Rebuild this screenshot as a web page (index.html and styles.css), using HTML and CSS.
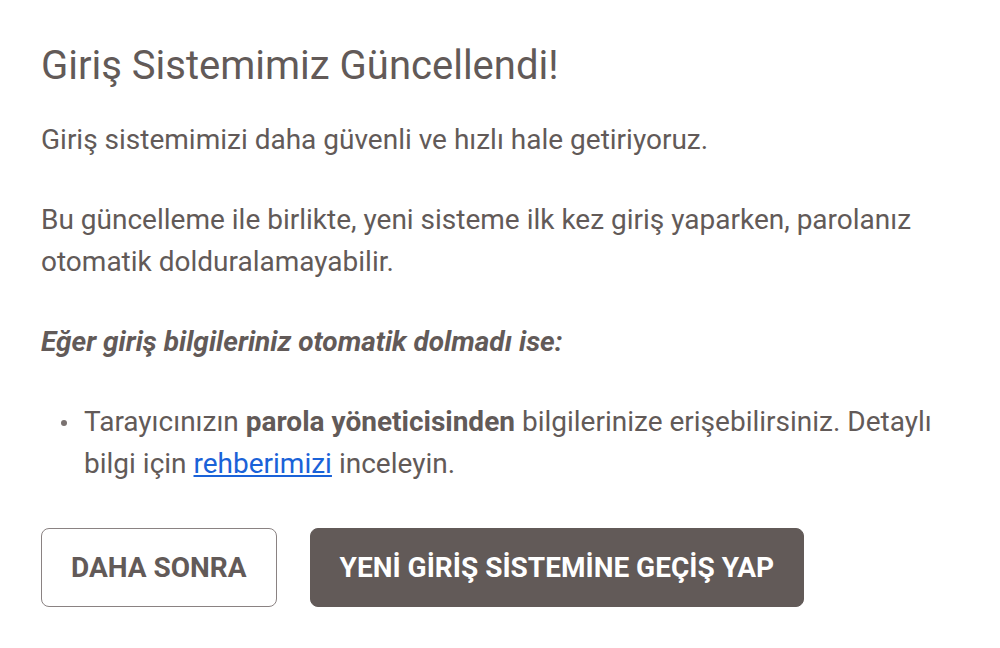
FILE: index.html
```html
<!DOCTYPE html>
<html lang="tr">
<head>
  <meta charset="utf-8">
  <title>Giriş Sistemimiz Güncellendi</title>
  <link rel="stylesheet" href="styles.css">
</head>
<body>

  <div class="notice">
    <h1>Giriş Sistemimiz Güncellendi!</h1>

    <p>Giriş sistemimizi daha güvenli ve hızlı hale getiriyoruz.</p>

    <p>Bu güncelleme ile birlikte, yeni sisteme ilk kez giriş yaparken, parolanız otomatik dolduralamayabilir.</p>

    <p class="lead">Eğer giriş bilgileriniz otomatik dolmadı ise:</p>

    <ul class="tips">
      <li>Tarayıcınızın <b>parola yöneticisinden</b> bilgilerinize erişebilirsiniz. Detaylı bilgi için <a href="#">rehberimizi</a> inceleyin.</li>
    </ul>

    <div class="actions">
      <button class="btn btn-outline">Daha Sonra</button>
      <button class="btn btn-dark">Yeni Giriş Sistemine Geçiş Yap</button>
    </div>
  </div>

</body>
</html>
```

FILE: styles.css
```css
body {
  margin: 0;
  background-color: #ffffff;
  color: #625a58;
  font-family: Roboto, "Noto Sans", sans-serif;
}

.notice {
  padding: 38px 41px;
}

h1 {
  margin: 0 0 25px 0;
  font-size: 40px;
  font-weight: 400;
  line-height: 56px;
}

p {
  margin: 0 0 38px 0;
  font-size: 28px;
  line-height: 42px;
}

.lead {
  font-weight: bold;
  font-style: italic;
}

.tips {
  margin: 0 0 43px 0;
  padding-left: 43px;
  list-style: none;
  font-size: 28px;
  line-height: 42px;
}

.tips li {
  position: relative;
}

.tips li::before {
  content: "";
  position: absolute;
  left: -23px;
  top: 19px;
  width: 6px;
  height: 6px;
  border-radius: 50%;
  background-color: #7a7270;
}

.tips a {
  color: #1a62d8;
}

.actions {
  display: flex;
  gap: 33px;
}

.btn {
  height: 79px;
  padding: 0 29px;
  border-radius: 8px;
  font-family: Roboto, "Noto Sans", sans-serif;
  font-size: 28px;
  font-weight: bold;
  text-transform: uppercase;
  cursor: pointer;
}

.btn-outline {
  background-color: #ffffff;
  border: 1.5px solid #8a8282;
  color: #625a58;
}

.btn-dark {
  background-color: #625a58;
  border: 1.5px solid #625a58;
  color: #ffffff;
}
```
